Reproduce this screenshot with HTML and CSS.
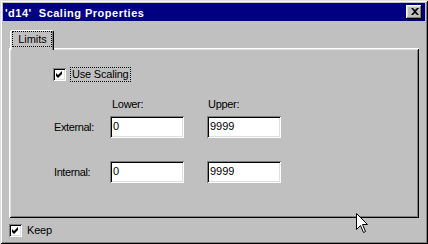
FILE: index.html
```html
<!DOCTYPE html>
<html lang="en">
  <head>
    <meta charset="UTF-8" />
    <meta name="viewport" content="width=device-width, initial-scale=1.0" />
    <title>Scaling Properties</title>
    <link rel="stylesheet" href="styles.css">
  </head>
  <body>
    <div class="window">
      <div class="title-bar">
        <span class="title-text">'d14'&nbsp; Scaling Properties</span>
        <button class="close-btn" aria-label="Close">
          <svg width="8" height="7" viewBox="0 0 8 7">
            <path d="M0,0 H2 L4,2 L6,0 H8 L5,3.5 L8,7 H6 L4,5 L2,7 H0 L3,3.5 Z" fill="#000" />
          </svg>
        </button>
      </div>

      <div class="window-body">
        <div class="tabs">
          <div class="tab active"><span class="focus">Limits</span></div>
        </div>

        <div class="tab-panel">
          <label class="check-row">
            <span class="checkbox">
              <svg width="9" height="9" viewBox="0 0 9 9">
                <path d="M1,3 L3,5 L7,1 L7,4 L3,8 L1,6 Z" fill="#000" />
              </svg>
            </span>
            <span class="focus">Use Scaling</span>
          </label>

          <div class="col-heads">
            <span class="col-head lower">Lower:</span>
            <span class="col-head">Upper:</span>
          </div>
          <div class="field-row">
            <span class="row-label">External:</span>
            <div class="field first">0</div>
            <div class="field">9999</div>
          </div>
          <div class="field-row">
            <span class="row-label">Internal:</span>
            <div class="field first">0</div>
            <div class="field">9999</div>
          </div>
        </div>

        <label class="check-row keep">
          <span class="checkbox">
            <svg width="9" height="9" viewBox="0 0 9 9">
              <path d="M1,3 L3,5 L7,1 L7,4 L3,8 L1,6 Z" fill="#000" />
            </svg>
          </span>
          <span class="keep-text">Keep</span>
        </label>
      </div>

      <!-- mouse pointer lying over the dialog -->
      <svg class="cursor" width="13" height="21" viewBox="0 0 13 21">
        <path d="M0.5,0.5 L0.5,16.5 L4.5,12.5 L7.5,19.5 L9.5,18.5 L6.5,11.5 L11.5,11.5 Z"
              fill="#fff" stroke="#000" stroke-width="1" />
      </svg>
    </div>
  </body>
</html>
```

FILE: styles.css
```css
body {
  margin: 0;
  padding: 0;
  background-color: #c0c0c0;
  font-family: "Liberation Sans", Arial, sans-serif;
  font-size: 11px;
  line-height: 13px;
  color: #000;
}

.window {
  position: relative;
  width: 428px;
  height: 244px;
  box-sizing: border-box;
  padding: 3px;
  background-color: #c0c0c0;
  box-shadow: inset 1px 1px #dfdfdf, inset -1px -1px #000,
    inset 2px 2px #fff, inset -2px -2px #808080;
  overflow: hidden;
}

.title-bar {
  display: flex;
  align-items: center;
  justify-content: space-between;
  height: 18px;
  padding: 0 3px 0 2px;
  background-color: #000080;
  color: #fff;
}

.title-text {
  font-weight: bold;
  letter-spacing: 0.5px;
  line-height: 18px;
  padding-top: 1px;
}

.close-btn {
  display: flex;
  align-items: center;
  justify-content: center;
  width: 16px;
  height: 14px;
  padding: 0 0 1px 1px;
  border: none;
  background-color: #c0c0c0;
  box-shadow: inset -1px -1px #000, inset 1px 1px #fff,
    inset -2px -2px #808080, inset 2px 2px #dfdfdf;
}

.window-body {
  padding: 9px 6px 0 6px;
}

.tabs {
  display: flex;
  padding-left: 1px;
}

.tab {
  position: relative;
  z-index: 1;
  width: 44px;
  height: 20px;
  box-sizing: border-box;
  margin-bottom: -2px;
  padding: 1px 2px 0 2px;
  background-color: #c0c0c0;
  border-radius: 2px 2px 0 0;
  box-shadow: inset 1px 1px #fff, inset -1px 0 #000,
    inset 2px 0 #dfdfdf, inset -2px 0 #808080;
}

.tab .focus {
  display: block;
  height: 16px;
  line-height: 14px;
  text-align: center;
  padding-left: 1px;
}

.focus {
  border: 1px dotted #000;
  box-sizing: border-box;
}

.tab-panel {
  height: 170px;
  box-sizing: border-box;
  padding: 19px 0 0 44px;
  background-color: #c0c0c0;
  box-shadow: inset 1px 1px #fff, inset -1px -1px #000,
    inset 2px 2px #dfdfdf, inset -2px -2px #808080;
}

.check-row {
  display: flex;
  align-items: center;
  gap: 4px;
  letter-spacing: -0.2px;
}

.check-row .focus {
  padding: 0 1px 0 1px;
  line-height: 13px;
}

.checkbox {
  display: flex;
  align-items: center;
  justify-content: center;
  width: 13px;
  height: 13px;
  box-sizing: border-box;
  background-color: #fff;
  box-shadow: inset 1px 1px #808080, inset -1px -1px #fff,
    inset 2px 2px #000, inset -2px -2px #dfdfdf;
}

.col-heads {
  display: flex;
  margin-top: 16px;
  padding-left: 59px;
  letter-spacing: -0.3px;
}

.col-head.lower {
  width: 96px;
}

.field-row {
  display: flex;
  align-items: center;
  margin-top: 5px;
}

.field-row + .field-row {
  margin-top: 23px;
}

.row-label {
  width: 56px;
  padding-left: 1px;
  letter-spacing: -0.4px;
}

.field {
  width: 74px;
  height: 22px;
  box-sizing: border-box;
  padding: 4px 3px 0 3px;
  background-color: #fff;
  box-shadow: inset 1px 1px #808080, inset -1px -1px #fff,
    inset 2px 2px #000, inset -2px -2px #dfdfdf;
}

.field.first {
  margin-right: 23px;
}

.keep {
  margin-top: 6px;
  gap: 5px;
}

.cursor {
  position: absolute;
  left: 356px;
  top: 213px;
}
```
